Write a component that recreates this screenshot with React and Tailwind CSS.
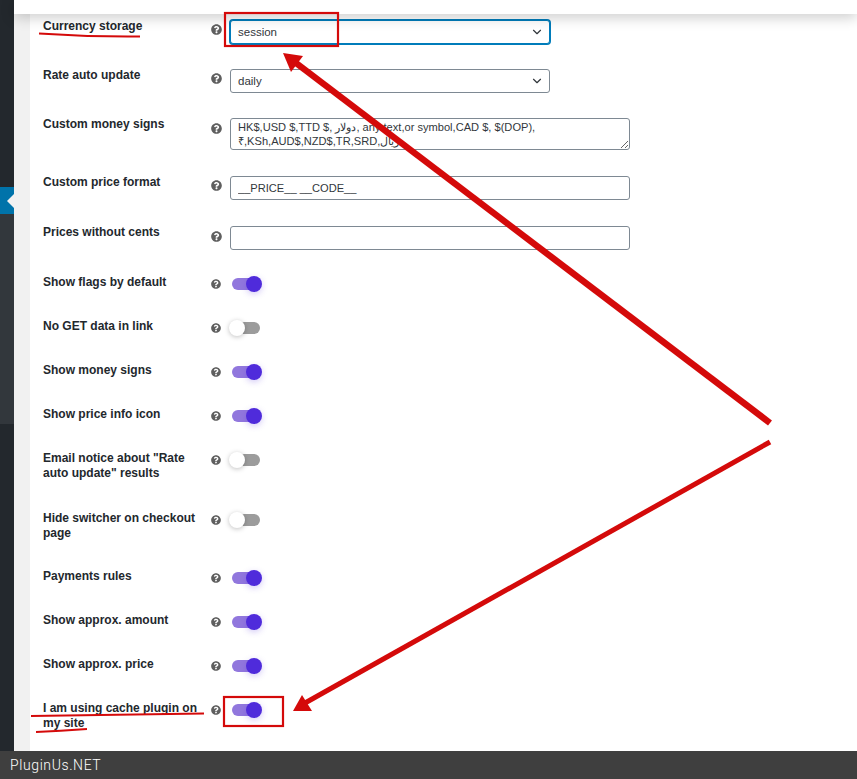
import React from 'react';
import { FaQuestionCircle } from 'react-icons/fa';
import { ChevronDown } from 'lucide-react';

// Help mark in front of every control
const Help = ({ small }) => (
  <FaQuestionCircle className={`text-[#5f5f5f] shrink-0 ${small ? 'w-[10px] h-[10px]' : 'w-[11px] h-[11px]'}`} />
);

const Toggle = ({ on }) => (
  <div className="relative w-[33px] h-[16px] ml-[-1px]">
    <div className={`absolute top-[2px] left-[3px] w-[28px] h-[12px] rounded-full ${on ? 'bg-[#9177dd]' : 'bg-[#9c9c9c]'}`} />
    <div className={`absolute top-0 w-[16px] h-[16px] rounded-full ${on ? 'left-[17px] bg-[#4f2bdb] shadow-[0_2px_6px_rgba(79,43,219,0.25)]' : 'left-0 bg-white shadow-[0_1px_5px_rgba(0,0,0,0.25)]'}`} />
  </div>
);

const SelectBox = ({ value, focused }) => (
  <div className={`flex items-center justify-between w-[320px] h-[24px] rounded-[3px] bg-white pl-[7px] pr-[5px] text-[11.5px] text-[#32373c] border ${focused ? 'border-[#007cba] shadow-[0_0_0_1px_#007cba]' : 'border-[#7e8993]'}`}>
    <span className="pt-[2px]">{value}</span>
    <ChevronDown size={14} strokeWidth={2} className="text-[#32373c]" />
  </div>
);

const TextBox = ({ value }) => (
  <input
    readOnly
    value={value}
    className="block w-[400px] h-[24px] rounded-[3px] bg-white border border-[#7e8993] px-[7px] text-[11.1px] text-[#32373c] outline-none"
  />
);

const Row = ({ h, label, children, helpTop, controlTop, labelTop, smallHelp }) => (
  <div className="flex" style={{ height: h }}>
    <div className="w-[181px] pl-[13px] pr-[13px] text-[12px] font-bold leading-[15px] text-[#23282d]" style={{ marginTop: labelTop }}>
      {label}
    </div>
    <div className="w-[19px]" style={{ paddingTop: helpTop }}>
      <Help small={smallHelp} />
    </div>
    <div style={{ paddingTop: controlTop }}>{children}</div>
  </div>
);

const toggleRows = [
  { h: 44, label: 'Show flags by default', on: true },
  { h: 44, label: 'No GET data in link', on: false },
  { h: 44, label: 'Show money signs', on: true },
  { h: 44, label: 'Show price info icon', on: true },
  { h: 60, label: 'Email notice about "Rate auto update" results', on: false },
  { h: 58, label: 'Hide switcher on checkout page', on: false },
  { h: 44, label: 'Payments rules', on: true },
  { h: 44, label: 'Show approx. amount', on: true },
  { h: 44, label: 'Show approx. price', on: true },
  { h: 43, label: 'I am using cache plugin on my site', on: true },
];

// Hand drawn marks that lie over the settings form
const Annotations = () => (
  <svg className="absolute inset-0 pointer-events-none" width="857" height="779" viewBox="0 0 857 779">
    <rect x="225" y="13" width="113" height="33" fill="none" stroke="#d40a0a" strokeWidth="2.2" />
    <rect x="224" y="697" width="59" height="29" fill="none" stroke="#d40a0a" strokeWidth="2.2" />
    <path d="M770 423 L296 63" stroke="#d40a0a" strokeWidth="6.5" fill="none" />
    <path d="M283 53 L303 56 L291 72 Z" fill="#d40a0a" />
    <path d="M770 442 L305 703" stroke="#d40a0a" strokeWidth="5" fill="none" />
    <path d="M293 711 L302 695 L312 711 Z" fill="#d40a0a" />
    <path d="M39 33.5 Q90 37 140 36.5" stroke="#d40a0a" strokeWidth="2" fill="none" />
    <path d="M31 716 Q120 715 204 713.5" stroke="#d40a0a" strokeWidth="2" fill="none" />
    <path d="M36 732 Q60 731 87 729" stroke="#d40a0a" strokeWidth="2" fill="none" />
  </svg>
);

export default function App() {
  return (
    <div className="relative w-[857px] h-[779px] overflow-hidden flex flex-col bg-white font-['Liberation_Sans',sans-serif]">
      <div className="flex flex-1 min-h-0">
        {/* Admin menu strip */}
        <div className="w-[14px] flex flex-col bg-[#23282d]">
          <div className="h-[187px]" />
          <div className="relative h-[27px] bg-[#0073aa]">
            <div className="absolute right-0 top-[7px] w-0 h-0 border-y-[7px] border-y-transparent border-r-[7px] border-r-[#f1f1f1]" />
          </div>
          <div className="h-[210px] bg-[#32373c]" />
        </div>
        <div className="w-[16px] bg-[#f1f1f1]" />

        {/* Settings form */}
        <div className="flex-1 min-w-0 pt-[14px]">
          <Row h={55} label="Currency storage" labelTop={5} helpTop={10} controlTop={6}>
            <SelectBox value="session" focused />
          </Row>
          <Row h={49} label="Rate auto update" labelTop={-1} helpTop={4} controlTop={0}>
            <SelectBox value="daily" />
          </Row>
          <Row h={58} label="Custom money signs" labelTop={-1} helpTop={5} controlTop={0}>
            <textarea
              readOnly
              value="HK$,USD $,TTD $, دولار, any text,or symbol,CAD $, $(DOP), ₹,KSh,AUD$,NZD$,TR,SRD,ريال"
              className="block w-[400px] h-[32px] rounded-[3px] bg-white border border-[#7e8993] px-[7px] py-px text-[11.1px] leading-[14px] text-[#32373c] outline-none resize-y"
            />
          </Row>
          <Row h={50} label="Custom price format" labelTop={-1} helpTop={4} controlTop={0}>
            <TextBox value="__PRICE__ __CODE__" />
          </Row>
          <Row h={50} label="Prices without cents" labelTop={-1} helpTop={5} controlTop={0}>
            <TextBox value="" />
          </Row>
          {toggleRows.map((row) => (
            <Row key={row.label} h={row.h} label={row.label} labelTop={-1} helpTop={3} controlTop={0} smallHelp>
              <Toggle on={row.on} />
            </Row>
          ))}
        </div>
      </div>

      {/* Footer bar */}
      <div className="h-[28px] shrink-0 bg-[#3f3f3f] flex items-center pl-[10px] text-[14px] font-light tracking-[0.6px] text-white font-['Roboto',sans-serif]">
        PluginUs.NET
      </div>

      {/* Sticky top bar with its shadow */}
      <div className="absolute top-0 left-[14px] right-0 h-[14px] bg-white shadow-[0_3px_14px_rgba(0,0,0,0.22)]" />
      <Annotations />
    </div>
  );
}
